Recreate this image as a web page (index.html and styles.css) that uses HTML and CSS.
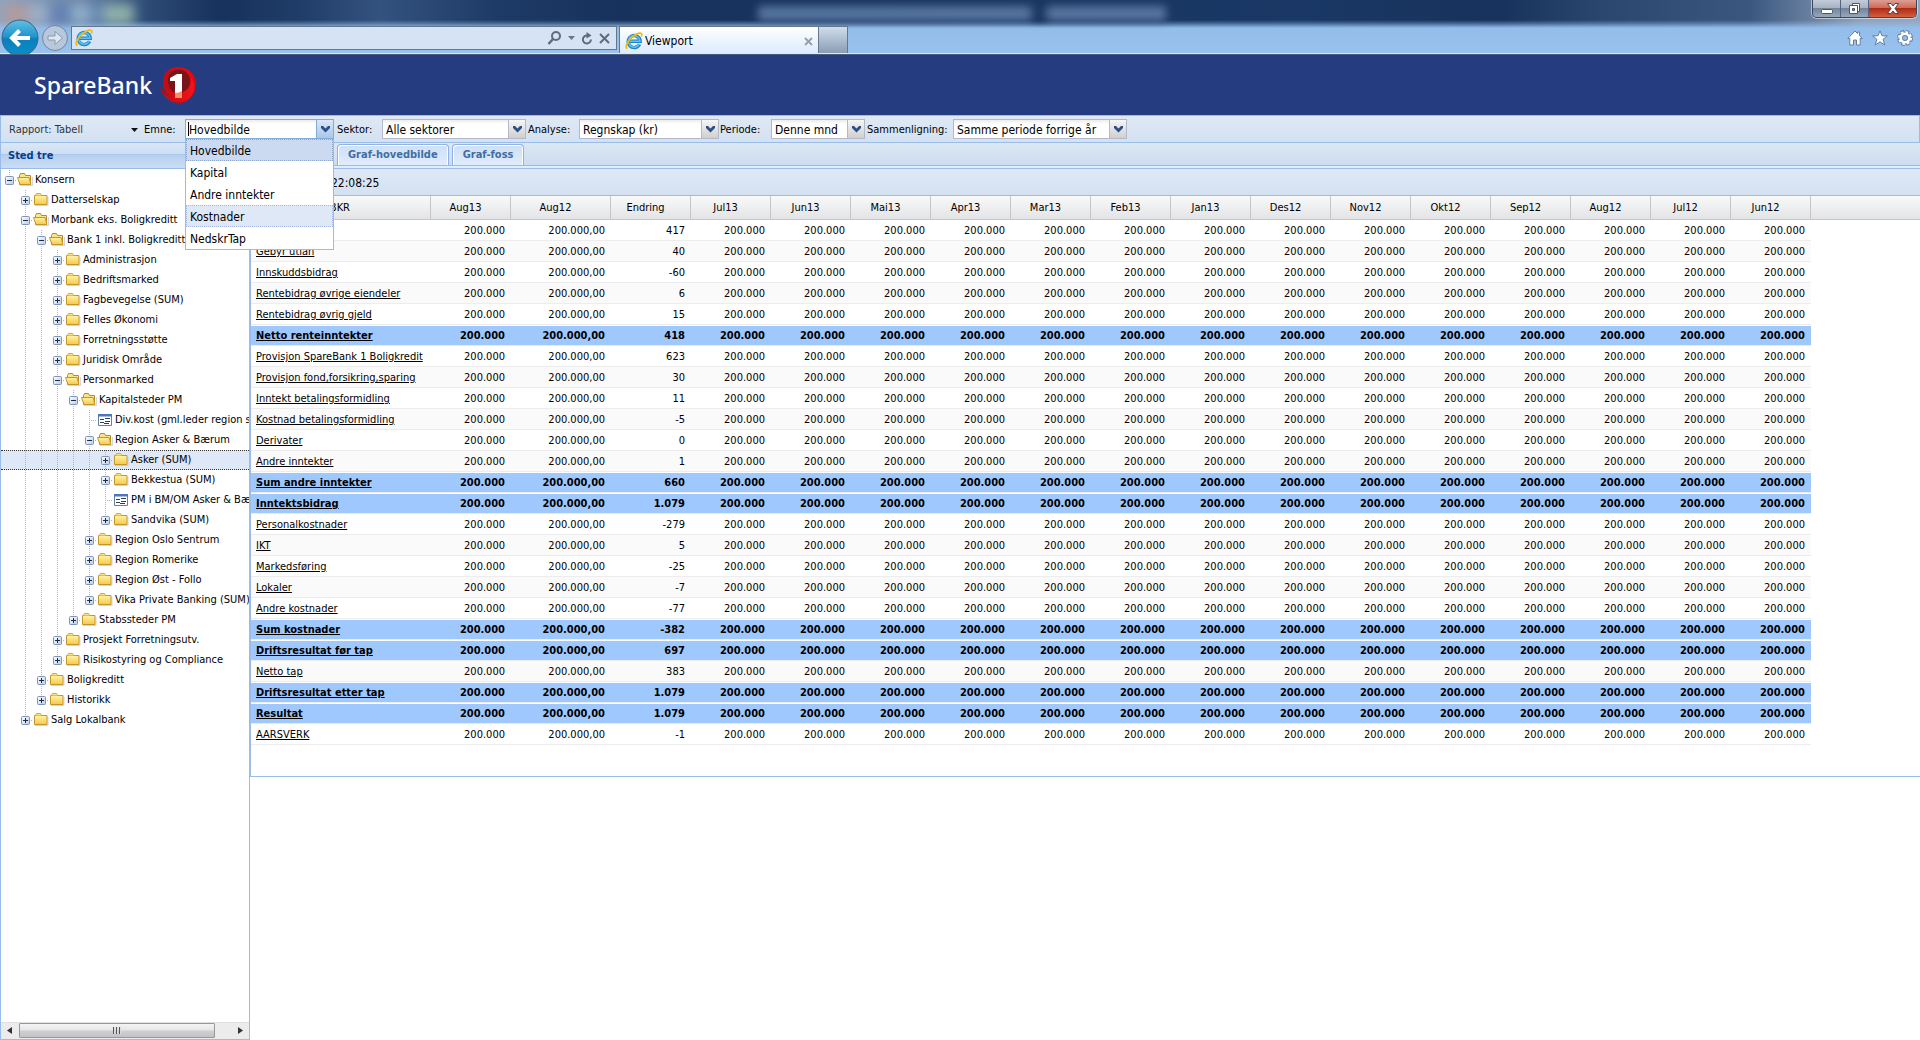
FILE: index.html
```html
<!DOCTYPE html>
<html lang="no">
<head>
<meta charset="utf-8">
<meta name="viewport" content="width=device-width, initial-scale=1">
<title>Viewport</title>
<link rel="stylesheet" href="styles.css">
</head>
<body>
<svg class="defs" width="0" height="0" aria-hidden="true">
  <defs>
    <linearGradient id="gFolder" x1="0" y1="0" x2="0" y2="1"><stop offset="0" stop-color="#fff3a6"/><stop offset="1" stop-color="#f5c94a"/></linearGradient>
    <linearGradient id="gBox" x1="0" y1="0" x2="1" y2="1"><stop offset="0" stop-color="#ffffff"/><stop offset="1" stop-color="#b9cbe3"/></linearGradient>
    <linearGradient id="gBack" x1="0" y1="0" x2="0" y2="1"><stop offset="0" stop-color="#63bfe4"/><stop offset=".48" stop-color="#1d93cb"/><stop offset=".52" stop-color="#0a7fbc"/><stop offset="1" stop-color="#0a8fcb"/></linearGradient>
    <linearGradient id="gRed" x1="0" y1="0" x2="1" y2="1"><stop offset="0" stop-color="#c40d14"/><stop offset=".5" stop-color="#e30b12"/><stop offset="1" stop-color="#b90a10"/></linearGradient>
    <linearGradient id="gTail" x1="0" y1="0" x2="1" y2="0"><stop offset="0" stop-color="#8d1620"/><stop offset=".4" stop-color="#d30c13"/><stop offset="1" stop-color="#f2151a"/></linearGradient>
    <symbol id="ie" viewBox="0 0 18 18">
      <path d="M14.6 12.2A6 6 0 1 1 15.2 9.3H5" fill="none" stroke="#1d86c8" stroke-width="3.4"/>
      <path d="M14.4 12A5.800 5.800 0 1 1 15 9.300H5" fill="none" stroke="#5fc1ee" stroke-width="1.600"/>
      <path d="M2.300 16.800C-.4 15 2.500 9 7.500 4.800 11.500 1.500 16 0 16.700 2c.3.900 0 1.800-.4 2.600" fill="none" stroke="#f5b90c" stroke-width="1.700"/>
    </symbol>
    <symbol id="plus" viewBox="0 0 9 9">
      <rect x=".5" y=".5" width="8" height="8" rx="1" fill="url(#gBox)" stroke="#7a95bd"/>
      <path d="M2 4.500h5M4.500 2v5" stroke="#1c2b45"/>
    </symbol>
    <symbol id="minus" viewBox="0 0 9 9">
      <rect x=".5" y=".5" width="8" height="8" rx="1" fill="url(#gBox)" stroke="#7a95bd"/>
      <path d="M2 4.500h5" stroke="#1c2b45"/>
    </symbol>
    <symbol id="folder" viewBox="0 0 16 16">
      <path d="M1.500 12.500v-9h12.500v9z" fill="url(#gFolder)" stroke="#c4952c"/>
      <path d="M2.500 3.500l1-2h4l1.500 2" fill="#fbe58c" stroke="#d6ab3c"/>
      <path d="M2 13.500h13V5" fill="none" stroke="#b7b7b7" opacity=".6"/>
    </symbol>
    <symbol id="folder-open" viewBox="0 0 16 16">
      <path d="M2.500 12.500V3.500l1-2h4l1 2h5v9z" fill="#fbe58c" stroke="#b98a1e"/>
      <path d="M.5 5.500h11.500l2 7h-11z" fill="url(#gFolder)" stroke="#c4952c"/>
      <path d="M3 13.500h12.500V5" fill="none" stroke="#b7b7b7" opacity=".6"/>
    </symbol>
    <symbol id="leaf" viewBox="0 0 16 16">
      <path d="M1.500 2.500h13v11h-13z" fill="#fff" stroke="#6480a8"/>
      <path d="M1 2h14v2.500H1z" fill="#4c79bd"/>
      <path d="M3 7.500h4M3 10.500h4M8 6.500h5M8 9.500h5M7 11.500h5" stroke="#2f3e55"/>
    </symbol>
  </defs>
</svg>

<header class="chrome">
  <div class="glass glass-left" aria-hidden="true"></div>
  <div class="glass glass-title" aria-hidden="true"></div>
  <div class="window-buttons">
    <button class="wb wb-min" aria-label="Minimer"><svg width="12" height="5"><rect x=".5" y=".5" width="11" height="4" rx="1" fill="#fff" stroke="#4d5668"/></svg></button>
    <button class="wb wb-max" aria-label="Gjenopprett"><svg width="14" height="13"><path d="M4.500 1.500h7v8h-2v-6h-5z" fill="#fff" stroke="#4d5668"/><path d="M1.500 3.500h8v8h-8zM4.500 6.500v2h2v-2z" fill="#fff" fill-rule="evenodd" stroke="#4d5668"/></svg></button>
    <button class="wb wb-close" aria-label="Lukk"><svg width="12" height="11"><path d="M.5.5h3.500l2 2.500 2-2.500h3.500L8 5.500l3.500 5H8L6 8l-2 2.500H.5L4 5.500z" fill="#fff" stroke="#5a4048"/></svg></button>
  </div>
  <div class="browser-bar">
    <button class="nav-back" aria-label="Tilbake"><svg width="38" height="38" viewBox="0 0 38 38"><circle cx="19" cy="19" r="18" fill="url(#gBack)" stroke="#41607c"/><path d="M29 19H12M18.500 11.500L11 19l7.500 7.500" fill="none" stroke="#fff" stroke-width="4"/></svg></button>
    <button class="nav-forward" aria-label="Frem"><svg width="26" height="26" viewBox="0 0 26 26"><circle cx="13" cy="13" r="12.500" fill="#b7c7dc" stroke="#75859b"/><path d="M6 11h7V6.500L20.500 13 13 19.500V15H6z" fill="#dde6f1" stroke="#8b9aaf"/></svg></button>
    <div class="address">
      <svg width="18" height="18"><use href="#ie"/></svg>
      <input class="address-input" type="text" aria-label="Adresse">
      <button class="flat" aria-label="Søk"><svg width="15" height="14"><circle cx="9" cy="5" r="4" fill="none" stroke="#5f6b78" stroke-width="2"/><path d="M6 8l-4.500 5" stroke="#5f6b78" stroke-width="2.500"/></svg></button>
      <button class="flat" aria-label="Vis liste"><svg width="7" height="4"><path d="M0 0h7L3.500 4z" fill="#6b7683"/></svg></button>
      <button class="flat" aria-label="Oppdater"><svg width="12" height="13"><path d="M6.500 3.500A4 4 0 1 0 9.900 7.500" fill="none" stroke="#5f6b78" stroke-width="2"/><path d="M5.500 0v6.500l5-3z" fill="#5f6b78"/></svg></button>
      <button class="flat" aria-label="Stopp"><svg width="11" height="11"><path d="M1 1l9 9M10 1l-9 9" stroke="#5f6b78" stroke-width="2"/></svg></button>
    </div>
    <div class="browser-tab">
      <svg width="18" height="18"><use href="#ie"/></svg>
      <span class="browser-tab-title">Viewport</span>
      <button class="flat" aria-label="Lukk fane"><svg width="9" height="9"><path d="M1 1l7 7M8 1L1 8" stroke="#9aa0a8" stroke-width="2"/></svg></button>
    </div>
    <button class="new-tab" aria-label="Ny fane"></button>
    <div class="browser-tools">
      <button class="flat" aria-label="Hjem"><svg width="16" height="16"><path d="M8 1L.8 8.500h2v6.500h3.700v-5h3v5h3.700V8.500h2L12.500 5.500V2h-2v1.500z" fill="#fff" stroke="#5f7fa5"/></svg></button>
      <button class="flat" aria-label="Favoritter"><svg width="16" height="16"><path d="M8 .8l2 5h5.300l-4.200 3.500 1.600 5.700L8 11.800 3.300 15l1.600-5.700L.7 5.800H6z" fill="#fff" stroke="#5f7fa5"/></svg></button>
      <button class="flat" aria-label="Verktøy"><svg width="16" height="16" viewBox="0 0 16 16"><circle cx="8" cy="8" r="6.300" fill="none" stroke="#5f7fa5" stroke-width="3.400" stroke-dasharray="3.300 1.650"/><circle cx="8" cy="8" r="4.300" fill="none" stroke="#5f7fa5" stroke-width="4.400"/><circle cx="8" cy="8" r="6" fill="none" stroke="#fff" stroke-width="2" stroke-dasharray="2.400 2.310"/><circle cx="8" cy="8" r="4.300" fill="none" stroke="#fff" stroke-width="2.600"/></svg></button>
    </div>
  </div>
</header>

<div class="brand">
  <span class="brand-name">SpareBank</span>
  <svg width="36" height="36" viewBox="0 0 36 36" role="img" aria-label="1">
    <path d="M3 16C2 7 9 0 18 0c11 0 18 8 18 17 0 11-8 19-17 19C10 36 2 29 0 20c2 3 5 5 8 6-3-3-5-6-5-10z" fill="url(#gRed)"/>
    <path d="M10 5c7-4 16-3 19 4 3 6 0 13-5 16-6 2-12 1-16-3C4 17 5 8 10 5z" fill="#7a141b"/>
    <path d="M3 16C3 9 7 4 13 3 8 7 7 13 9 19c1 3 3 5 5 7-6-1-11-5-11-10z" fill="#c20d14"/>
    <path d="M0 20c7 7 18 8 25 4 5-3 7-8 6-14 6 9 3 19-4 23-11 5-24-1-27-13z" fill="url(#gTail)"/>
    <path d="M10 11l7-4h5v24h-7V14h-5z" fill="#fff"/>
    <path d="M15 26c3 0 5-1 7-2v7h-7z" fill="#f3906e"/>
  </svg>
</div>

<form class="toolbar">
  <button type="button" class="report-button">Rapport: Tabell<svg width="7" height="4"><path d="M0 0h7L3.500 4z" fill="#111"/></svg></button>
  <label class="w-emne" for="emne">Emne:</label>
  <div class="combo combo-open w149">
    <select id="emne"><option>Hovedbilde</option><option>Kapital</option><option>Andre inntekter</option><option>Kostnader</option><option>NedskrTap</option></select>
    <svg class="arrow" width="9" height="7"><path d="M0 0h2l2.500 2.500L7 0h2v2L4.500 6.500 0 2z" fill="#2b4f87"/></svg>
    <ul class="combo-list">
      <li class="selected">Hovedbilde</li>
      <li>Kapital</li>
      <li>Andre inntekter</li>
      <li class="hover">Kostnader</li>
      <li>NedskrTap</li>
    </ul>
  </div>
  <label class="w-sektor" for="sektor">Sektor:</label>
  <div class="combo w144">
    <select id="sektor"><option>Alle sektorer</option></select>
    <svg class="arrow" width="9" height="7"><path d="M0 0h2l2.500 2.500L7 0h2v2L4.500 6.500 0 2z" fill="#2b4f87"/></svg>
  </div>
  <label class="w-analyse" for="analyse">Analyse:</label>
  <div class="combo w140">
    <select id="analyse"><option>Regnskap (kr)</option></select>
    <svg class="arrow" width="9" height="7"><path d="M0 0h2l2.500 2.500L7 0h2v2L4.500 6.500 0 2z" fill="#2b4f87"/></svg>
  </div>
  <label class="w-periode" for="periode">Periode:</label>
  <div class="combo w94">
    <select id="periode"><option>Denne mnd</option></select>
    <svg class="arrow" width="9" height="7"><path d="M0 0h2l2.500 2.500L7 0h2v2L4.500 6.500 0 2z" fill="#2b4f87"/></svg>
  </div>
  <label class="w-samm" for="sammenligning">Sammenligning:</label>
  <div class="combo w174">
    <select id="sammenligning"><option>Samme periode forrige år</option></select>
    <svg class="arrow" width="9" height="7"><path d="M0 0h2l2.500 2.500L7 0h2v2L4.500 6.500 0 2z" fill="#2b4f87"/></svg>
  </div>
</form>

<main class="body">
  <aside class="side">
    <h2 class="side-title">Sted tre</h2>
    <div class="tree" id="tree" role="tree"></div>
    <div class="scrollbar" aria-hidden="true">
      <span class="sb-arrow"><svg width="5" height="7"><path d="M5 0v7L0 3.500z" fill="#333"/></svg></span>
      <span class="sb-track"><span class="sb-thumb"><i></i><i></i><i></i></span></span>
      <span class="sb-arrow"><svg width="5" height="7"><path d="M0 0v7l5-3.500z" fill="#333"/></svg></span>
    </div>
  </aside>
  <section class="content">
    <nav class="tabs">
      <button class="tab">Graf-hovedbilde</button>
      <button class="tab">Graf-foss</button>
    </nav>
    <div class="panel">
      <div class="panel-bar">22:08:25</div>
      <table class="grid">
        <colgroup id="cols"></colgroup>
        <thead><tr id="head"></tr></thead>
        <tbody id="rows"></tbody>
      </table>
    </div>
  </section>
</main>
<script src="app.js"></script>
</body>
</html>
```
FILE: styles.css
```css
* { box-sizing: border-box; }

body {
  margin: 0;
  min-height: 100vh;
  display: flex;
  flex-direction: column;
  background: #fff;
  color: #000;
  font: 11px/14px "DejaVu Sans Condensed", "DejaVu Sans", sans-serif;
}

button, select, input { font: inherit; color: inherit; }
button { border: 0; padding: 0; margin: 0; background: none; }
svg { display: block; flex: none; }
.defs { position: absolute; }

/* Browser frame */
.chrome {
  position: relative;
  height: 55px;
  overflow: hidden;
  border-bottom: 1px solid #4b5c78;
  box-shadow: inset 0 -1px 0 #dbe8f8;
  background:
    linear-gradient(to bottom, transparent 20px, rgba(150, 192, 236, .3) 23px, #93bdea 28px, #9ac2ee 54px),
    linear-gradient(to right, #8fa4bf 0, #6c86a6 80px, #2b4a74 150px, #17325c 220px, #1f3d68 300px, #34527e 380px, #1d3a66 500px, #17325c 620px, #1a3865 1300px, #17325c 1500px, #2a466f 1600px, #3a577f 1750px, #8fa1ba 1860px, #93a6be 100%);
}

.glass { position: absolute; }
.glass-left {
  left: 4px; top: 4px; width: 130px; height: 20px;
  filter: blur(6px);
  opacity: .7;
  background: linear-gradient(to right, #c69a92 0 20px, #a9bad0 28px 42px, #5d7bb5 48px 64px, #9fc0d8 70px 84px, #6a8fc0 88px 96px, #aed0b8 104px 100%);
}
.glass-title {
  left: 758px; top: 6px; width: 408px; height: 15px;
  filter: blur(4px);
  background: linear-gradient(to right, #55749e 0 270px, #17325c 278px 284px, #55749e 292px);
}

.window-buttons {
  position: absolute;
  right: 3px; top: 0;
  display: flex;
  height: 18px;
  border: 1px solid #39465c;
  border-top: 0;
  border-radius: 0 0 5px 5px;
  overflow: hidden;
  box-shadow: 0 0 0 1px rgba(255, 255, 255, .5);
}
.wb {
  width: 28px;
  display: flex;
  align-items: center;
  justify-content: center;
  border-right: 1px solid #55647c;
  background: linear-gradient(to bottom, #c3ccd8 0, #a7b3c4 45%, #74849c 50%, #98a8bc 100%);
}
.wb-min { padding-top: 5px; }
.wb-close {
  width: 47px;
  border-right: 0;
  background: linear-gradient(to bottom, #dc9f93 0, #cf6b59 45%, #b02b16 50%, #d2603e 100%);
}

.browser-bar {
  position: relative;
  display: flex;
  align-items: flex-start;
  height: 54px;
  padding: 26px 7px 0 0;
}
.nav-back { margin: -7px 0 0 1px; }
.nav-forward { margin: -1px 0 0 3px; }
.address {
  display: flex;
  align-items: center;
  gap: 6px;
  width: 546px;
  height: 24px;
  margin: 0 2px 0 3px;
  padding: 0 6px 0 3px;
  border: 1px solid #66778c;
  background: #d6e3f4;
}
.address-input {
  flex: 1;
  min-width: 0;
  border: 0;
  background: none;
  outline: none;
}
.browser-tab {
  display: flex;
  align-items: center;
  gap: 2px;
  width: 200px;
  height: 27px;
  padding: 2px 5px 0;
  border: 1px solid #66778c;
  border-bottom: 0;
  background: linear-gradient(to bottom, #fff, #dcebfd);
}
.browser-tab-title { flex: 1; font-size: 12px; }
.new-tab {
  width: 30px;
  height: 27px;
  margin-left: -1px;
  border: 1px solid #66778c;
  border-bottom: 0;
  background: linear-gradient(to bottom, #cfdded, #8b9db3);
}
.browser-tools { display: flex; gap: 9px; margin: 4px 0 0 auto; }

/* Bank header */
.brand {
  display: flex;
  align-items: center;
  gap: 7px;
  height: 60px;
  padding-left: 34px;
  background: #253c80;
}
.brand-name {
  width: 119px;
  color: #fff;
  font: 500 23px/32px "Noto Sans", sans-serif;
}

/* Filter toolbar */
.toolbar {
  display: flex;
  align-items: flex-start;
  height: 28px;
  padding: 3px 8px;
  border: 1px solid #99bce8;
  background: linear-gradient(to bottom, #dfe9f5, #d3e1f1);
}
.toolbar label { line-height: 22px; white-space: nowrap; }
.report-button {
  display: flex;
  align-items: center;
  justify-content: space-between;
  width: 129px;
  height: 22px;
  color: #333;
}
.w-emne { width: 47px; padding-left: 6px; }
.w-sektor { width: 48px; padding-left: 3px; }
.w-analyse { width: 53px; padding-left: 2px; }
.w-periode { width: 52px; padding-left: 1px; }
.w-samm { width: 88px; padding-left: 2px; }

.combo { position: relative; height: 20px; }
.w149 { width: 149px; }
.w144 { width: 144px; }
.w140 { width: 140px; }
.w94 { width: 94px; }
.w174 { width: 174px; }
.combo select {
  width: 100%;
  height: 20px;
  padding: 2px 18px 0 3px;
  border: 1px solid #b5b8c8;
  border-radius: 0;
  outline: 0;
  appearance: none;
  font-size: 12px;
  background:
    linear-gradient(#b5b8c8, #b5b8c8) right 16px top 0 / 1px 100% no-repeat,
    linear-gradient(to bottom, #f6f6f6, #cfcfcf) right 0 top 0 / 16px 100% no-repeat,
    linear-gradient(to bottom, #ececec, #fff 4px);
}
.combo .arrow { position: absolute; right: 4px; top: 7px; pointer-events: none; }
.combo-open select {
  border-color: #7eadd9;
  background:
    linear-gradient(#7eadd9, #7eadd9) right 16px top 0 / 1px 100% no-repeat,
    linear-gradient(to bottom, #dbe8f8, #a9c6ea) right 0 top 0 / 16px 100% no-repeat,
    linear-gradient(to bottom, #ececec, #fff 4px);
}
.combo-open::before {
  content: "";
  position: absolute;
  left: 3px; top: 3px;
  width: 1px; height: 14px;
  background: #000;
}
.combo-list {
  position: absolute;
  z-index: 5;
  top: 20px; left: 0;
  width: 100%;
  margin: 0;
  padding: 0;
  list-style: none;
  font-size: 12px;
  background: #fff;
  border: 1px solid #99bce8;
  border-top: 0;
}
.combo-list li {
  padding: 2px 3px 0;
  border: 1px dotted #fff;
  line-height: 18px;
}
.combo-list .selected { background: #cbdaf0; border-color: #8ba4cf; }
.combo-list .hover { background: #dfe8f6; border-color: #a3bae9; }

/* Work area */
.body { flex: 1; display: flex; align-items: stretch; }

.side {
  display: flex;
  flex-direction: column;
  width: 250px;
  flex: none;
  border: solid #99bce8;
  border-width: 0 1px 1px;
}
.side-title {
  margin: 0;
  height: 26px;
  padding-left: 7px;
  color: #04408c;
  font-size: 11px;
  line-height: 26px;
  border-bottom: 1px solid #99bce8;
  background: linear-gradient(to bottom, #dae7f6 0, #cddef3 45%, #abc7ec 46%, #b8cfee 50%, #cbddf3 100%);
}
.tree { flex: 1; padding-top: 1px; overflow: hidden; }
.node {
  display: flex;
  align-items: center;
  height: 20px;
  white-space: nowrap;
  border: dotted transparent;
  border-width: 1px 0;
}
.node.active { background: #dfe8f6; border-color: #333; }
.node-label { padding-left: 2px; }
.indent {
  display: flex;
  align-items: center;
  justify-content: flex-end;
  width: 16px;
  height: 20px;
  flex: none;
}
.elbow { justify-content: flex-end; padding-right: 3px; }
.line { background: repeating-linear-gradient(to bottom, #b4b4b4 0 1px, transparent 1px 2px) 8px 0 / 1px 100% no-repeat; }
.elbow {
  background:
    repeating-linear-gradient(to bottom, #b4b4b4 0 1px, transparent 1px 2px) 8px 0 / 1px 100% no-repeat,
    repeating-linear-gradient(to right, #b4b4b4 0 1px, transparent 1px 2px) 8px 10px / 8px 1px no-repeat;
}
.elbow-last {
  background:
    repeating-linear-gradient(to bottom, #b4b4b4 0 1px, transparent 1px 2px) 8px 0 / 1px 50% no-repeat,
    repeating-linear-gradient(to right, #b4b4b4 0 1px, transparent 1px 2px) 8px 10px / 8px 1px no-repeat;
}

.scrollbar {
  display: flex;
  height: 17px;
  padding-bottom: 1px;
  background: #ececec;
  border-top: 1px solid #e0e0e0;
}
.sb-arrow { width: 17px; display: flex; align-items: center; justify-content: center; }
.sb-track { flex: 1; padding-left: 1px; }
.sb-thumb {
  display: flex;
  align-items: center;
  justify-content: center;
  gap: 1px;
  width: 92%;
  height: 15px;
  border: 1px solid #979797;
  border-radius: 1px;
  background: linear-gradient(to bottom, #f4f4f4 0, #e6e6e8 48%, #cfcfd3 52%, #c2c2c8 100%);
}
.sb-thumb i { width: 2px; height: 7px; background: linear-gradient(to right, #555 50%, #ddd 50%); }

.content { flex: 1; min-width: 0; }
.tabs {
  display: flex;
  gap: 3px;
  height: 26px;
  padding: 1px 0 3px 87px;
  border-bottom: 1px solid #99bce8;
  background:
    linear-gradient(#99bce8, #99bce8) 0 22px / 100% 1px no-repeat,
    linear-gradient(#deecfd, #deecfd) 0 23px / 100% 2px no-repeat,
    linear-gradient(to bottom, #dbe7f4, #cbdbef);
}
.tab {
  height: 21px;
  padding: 0 10px;
  color: #416da3;
  font-weight: bold;
  border: 1px solid #8db2e3;
  border-bottom: 0;
  border-radius: 4px 4px 0 0;
  box-shadow: inset 1px 1px 0 #fff, inset -1px 0 0 #fff;
  background: linear-gradient(to bottom, #cfe0f5, #deecfd);
}
.panel {
  padding-bottom: 31px;
  border-left: 1px solid #99bce8;
  border-bottom: 1px solid #99bce8;
}
.panel-bar {
  height: 27px;
  padding-left: 80px;
  font-size: 12px;
  line-height: 28px;
  border-bottom: 1px solid #99bce8;
  background: linear-gradient(to bottom, #dfe9f5, #d3e1f1);
}
.grid {
  width: 100%;
  table-layout: fixed;
  border-collapse: separate;
  border-spacing: 0;
}
.c-name { width: 180px; }
.c-wide { width: 100px; }
.c-num { width: 80px; }
.grid th {
  height: 24px;
  padding: 0 10px 0 0;
  font-weight: normal;
  line-height: 23px;
  border-right: 1px solid #c5c5c5;
  border-bottom: 1px solid #c5c5c5;
  background: linear-gradient(to bottom, #f9f9f9, #e3e4e6);
}
.grid th:first-child { text-align: right; padding-right: 80px; }
.grid th:last-child { border-right: 0; }
.grid td {
  height: 21px;
  padding: 0 6px;
  text-align: right;
  line-height: 19px;
  white-space: nowrap;
  border-top: 1px solid #fff;
  border-bottom: 1px solid #ededed;
}
.grid td:first-child { text-align: left; padding-left: 5px; }
.grid td:last-child { border-color: transparent; }
.grid .alt td:not(:last-child) { background: #fafafa; border-top-color: #fafafa; }
.grid .sum td:not(:last-child) { background: #9fc8ff; font-weight: bold; }
.grid a { color: #000; text-decoration: underline; }
```
FILE: app.js
```js
// [depth, type, label]: "+" closed folder, "-" open folder, "." leaf, "*" closed and selected
const nodes = [
  [0, "-", "Konsern"],
  [1, "+", "Datterselskap"],
  [1, "-", "Morbank eks. Boligkreditt"],
  [2, "-", "Bank 1 inkl. Boligkreditt"],
  [3, "+", "Administrasjon"],
  [3, "+", "Bedriftsmarked"],
  [3, "+", "Fagbevegelse (SUM)"],
  [3, "+", "Felles Økonomi"],
  [3, "+", "Forretningsstøtte"],
  [3, "+", "Juridisk Område"],
  [3, "-", "Personmarked"],
  [4, "-", "Kapitalsteder PM"],
  [5, ".", "Div.kost (gml.leder region sentrum)"],
  [5, "-", "Region Asker & Bærum"],
  [6, "*", "Asker (SUM)"],
  [6, "+", "Bekkestua (SUM)"],
  [6, ".", "PM i BM/OM Asker & Bærum"],
  [6, "+", "Sandvika (SUM)"],
  [5, "+", "Region Oslo Sentrum"],
  [5, "+", "Region Romerike"],
  [5, "+", "Region Øst - Follo"],
  [5, "+", "Vika Private Banking (SUM)"],
  [4, "+", "Stabssteder PM"],
  [3, "+", "Prosjekt Forretningsutv."],
  [3, "+", "Risikostyring og Compliance"],
  [2, "+", "Boligkreditt"],
  [2, "+", "Historikk"],
  [1, "+", "Salg Lokalbank"]
];

// True when another node at this depth follows under the same parent.
function continues(index, depth) {
  for (let i = index + 1; i < nodes.length; i++) {
    if (nodes[i][0] < depth) return false;
    if (nodes[i][0] === depth) return true;
  }
  return false;
}

const icon = (name, size) => `<svg width="${size}" height="${size}"><use href="#${name}"/></svg>`;
const escape = text => text.replace(/&/g, "&amp;");

document.getElementById("tree").innerHTML = nodes.map(([depth, type, label], i) => {
  let cells = "";
  for (let d = 0; d < depth; d++) {
    cells += `<span class="indent${continues(i, d) ? " line" : ""}"></span>`;
  }
  const expander = type === "." ? "" : icon(type === "-" ? "minus" : "plus", 9);
  const picture = type === "." ? "leaf" : type === "-" ? "folder-open" : "folder";
  cells += `<span class="indent elbow${continues(i, depth) ? "" : " elbow-last"}">${expander}</span>`;
  return `<div class="node${type === "*" ? " active" : ""}" role="treeitem">${cells}${icon(picture, 16)}<span class="node-label">${escape(label)}</span></div>`;
}).join("");

const columns = ["BKR", "Aug13", "Aug12", "Endring", "Jul13", "Jun13", "Mai13", "Apr13", "Mar13",
  "Feb13", "Jan13", "Des12", "Nov12", "Okt12", "Sep12", "Aug12", "Jul12", "Jun12"];

// [label, change, is sum row]
const rows = [
  ["", "417"],
  ["Gebyr utlån", "40"],
  ["Innskuddsbidrag", "-60"],
  ["Rentebidrag øvrige eiendeler", "6"],
  ["Rentebidrag øvrig gjeld", "15"],
  ["Netto renteinntekter", "418", true],
  ["Provisjon SpareBank 1 Boligkredit", "623"],
  ["Provisjon fond,forsikring,sparing", "30"],
  ["Inntekt betalingsformidling", "11"],
  ["Kostnad betalingsformidling", "-5"],
  ["Derivater", "0"],
  ["Andre inntekter", "1"],
  ["Sum andre inntekter", "660", true],
  ["Inntektsbidrag", "1.079", true],
  ["Personalkostnader", "-279"],
  ["IKT", "5"],
  ["Markedsføring", "-25"],
  ["Lokaler", "-7"],
  ["Andre kostnader", "-77"],
  ["Sum kostnader", "-382", true],
  ["Driftsresultat før tap", "697", true],
  ["Netto tap", "383"],
  ["Driftsresultat etter tap", "1.079", true],
  ["Resultat", "1.079", true],
  ["AARSVERK", "-1"]
];

document.getElementById("cols").innerHTML =
  columns.map((c, i) => `<col class="${i === 0 ? "c-name" : i === 2 ? "c-wide" : "c-num"}">`).join("") + "<col>";
document.getElementById("head").innerHTML =
  columns.map(c => `<th scope="col">${c}</th>`).join("") + "<th></th>";
document.getElementById("rows").innerHTML = rows.map(([label, change, sum], i) => {
  const months = "<td>200.000</td>".repeat(14);
  return `<tr class="${sum ? "sum" : i % 2 ? "alt" : ""}"><td>${label ? `<a href="#">${label}</a>` : ""}</td>` +
    `<td>200.000</td><td>200.000,00</td><td>${change}</td>${months}<td></td></tr>`;
}).join("");
```
